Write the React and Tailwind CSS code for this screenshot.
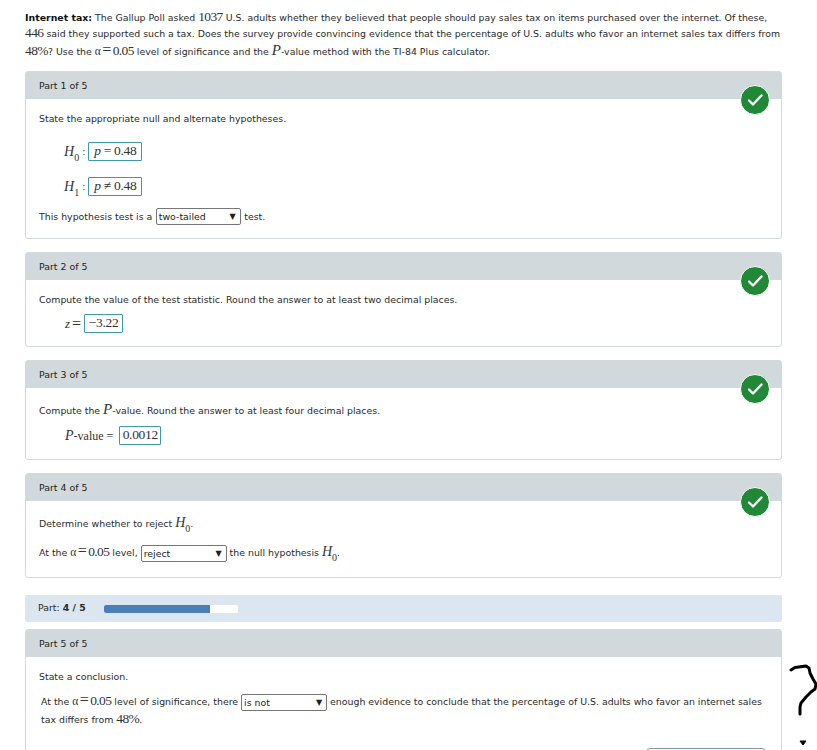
import React from 'react';

const Num = ({ children }) => (
  <span className="font-['Liberation_Serif',serif] text-[13.5px] leading-none tracking-[-0.6px] text-[#333]">{children}</span>
);

const Var = ({ children, className = '' }) => (
  <span className={`font-['Liberation_Serif',serif] italic leading-none text-[#333] ${className}`}>{children}</span>
);

const Hypo = ({ sub }) => (
  <span className="font-['Liberation_Serif',serif] text-[13px] leading-none text-[#333]">
    <i className="text-[14px]">H</i>
    <sub className="bottom-[-0.5em] text-[10px] not-italic">{sub}</sub>
  </span>
);

const Alpha = () => (
  <span className="font-['Liberation_Serif',serif] text-[13.5px] leading-none tracking-[-0.6px] text-[#333]">
    <span className="text-[11.5px]">α</span><span className="mx-[2px] text-[16px]">=</span>0.05
  </span>
);

const AnswerBox = ({ children, className = '' }) => (
  <span className={`inline-flex h-[19px] items-center justify-center whitespace-nowrap border border-[#3d98a8] rounded-[1px] font-['Liberation_Serif',serif] text-[13.5px] tracking-[-0.3px] text-[#333] ${className}`}>
    <span>{children}</span>
  </span>
);

const Select = ({ value, className = '' }) => (
  <span className={`inline-flex h-[17px] items-center justify-between border border-[#767676] rounded-[2px] pl-[2px] pr-[4px] text-[#222] align-middle ${className}`}>
    <span className="leading-none">{value}</span>
    <span className="text-[8px] leading-none">▼</span>
  </span>
);

const Check = () => (
  <div className="absolute right-[11px] top-[13px] flex h-[30px] w-[30px] items-center justify-center rounded-full border border-white bg-[#218838]">
    <svg width="18" height="14" viewBox="0 0 18 14" fill="none">
      <path d="M3 7.5 L7 11.5 L15.5 2.5" stroke="white" strokeWidth="2.4" strokeLinecap="round" strokeLinejoin="round" />
    </svg>
  </div>
);

const Part = ({ n, height, check = true, children }) => (
  <section className="relative rounded-[3px] border border-[#d3dadd] bg-white" style={{ height }}>
    <div className="flex h-[27px] items-center bg-[#d1d9dc] pl-[13px] pt-[1px] text-[#222]">Part {n} of 5</div>
    <div className="pl-[13px]">{children}</div>
    {check && <Check />}
  </section>
);

export default function App() {
  return (
    <div className="relative h-[750px] w-[817px] overflow-hidden bg-white font-['DejaVu_Sans',sans-serif] text-[9.4px] text-[#2a2a2a]">
      <div className="ml-[25px] w-[757px] pt-[10px]">
        <p className="h-[51px] whitespace-nowrap leading-[16.2px]">
          <b className="text-[#111]">Internet tax:</b> The Gallup Poll asked <Num>1037</Num> U.S. adults whether they believed that people should pay sales tax on items purchased over the internet. Of these,
          <br />
          <Num>446</Num> said they supported such a tax. Does the survey provide convincing evidence that the percentage of U.S. adults who favor an internet sales tax differs from
          <br />
          <Num>48%</Num>? Use the <Alpha /> level of significance and the <Var className="text-[15px]">P</Var>-value method with the TI-84 Plus calculator.
        </p>

        <div className="mt-[10px] flex flex-col gap-[13px]">
          <Part n={1} height={168}>
            <p className="mt-[13px]">State the appropriate null and alternate hypotheses.</p>
            <div className="ml-[25px] mt-[16px] flex items-center gap-[3px]">
              <Hypo sub="0" /><span className="text-[#333]">:</span>
              <AnswerBox className="w-[54px]"><i>p</i> = 0.48</AnswerBox>
            </div>
            <div className="ml-[25px] mt-[16px] flex items-center gap-[3px]">
              <Hypo sub="1" /><span className="text-[#333]">:</span>
              <AnswerBox className="w-[54px]"><i>p</i> ≠ 0.48</AnswerBox>
            </div>
            <div className="mt-[12px] flex items-center gap-[3.5px]">
              This hypothesis test is a <Select value="two-tailed" className="w-[85px]" /> test.
            </div>
          </Part>

          <Part n={2} height={95}>
            <p className="mt-[13px]">Compute the value of the test statistic. Round the answer to at least two decimal places.</p>
            <div className="ml-[26px] mt-[7px] flex items-center gap-[2px]">
              <Var className="text-[13px]">z</Var><span className="font-['Liberation_Serif',serif] text-[16px] leading-none text-[#333]">=</span>
              <AnswerBox className="ml-[1px] w-[39px]">−3.22</AnswerBox>
            </div>
          </Part>

          <Part n={3} height={100}>
            <p className="mt-[14px]">Compute the <Var className="text-[15px]">P</Var>-value. Round the answer to at least four decimal places.</p>
            <div className="ml-[26px] mt-[7px] flex items-center gap-[6px]">
              <span className="font-['Liberation_Serif',serif] text-[12px] text-[#333]"><i className="text-[14px]">P</i>-value =</span>
              <AnswerBox className="w-[42px]">0.0012</AnswerBox>
            </div>
          </Part>

          <Part n={4} height={105}>
            <p className="mt-[15px]">Determine whether to reject <Hypo sub="0" />.</p>
            <div className="mt-[12px]">
              At the <Alpha /> level, <Select value="reject" className="w-[86px]" /> the null hypothesis <Hypo sub="0" />.
            </div>
          </Part>
        </div>

        <div className="mt-[17px] flex h-[27px] items-center rounded-[2px] bg-[#dce6f0] pl-[13px]">
          <span className="w-[66px]">Part: <b>4 / 5</b></span>
          <div className="h-[8px] w-[134px] overflow-hidden rounded-[2px] bg-white">
            <div className="h-full w-[106px] bg-[#4a7eb8]" />
          </div>
        </div>

        <div className="mt-[7px]">
          <Part n={5} height={200} check={false}>
            <p className="mt-[13px]">State a conclusion.</p>
            <div className="ml-[2px] mt-[8px] w-[735px] leading-[18px]">
              At the <Alpha /> level of significance, there <Select value="is not" className="w-[86px]" /> enough evidence to conclude that the percentage of U.S. adults who favor an internet sales tax differs from <Num>48%</Num>.
            </div>
            <div className="absolute right-[15px] top-[118px] h-[20px] w-[120px] rounded-[4px] border border-[#7f9ba6] bg-white" />
          </Part>
        </div>
      </div>

      {/* hand-drawn question mark scribbled on the screenshot */}
      <svg className="absolute left-[785px] top-[660px]" width="32" height="90" viewBox="0 0 32 90" fill="none">
        <path d="M6 10 L10 7.5 L21 6 L24 8 L25 13 L28 19 L31 24 L30 29 L26 32 L21 37 L16 43 L15 47 L15 54" stroke="black" strokeWidth="3" strokeLinecap="round" strokeLinejoin="round" />
        <path d="M15 81 L21 81 L18 85 Z" fill="black" stroke="black" strokeWidth="1" strokeLinejoin="round" />
      </svg>
    </div>
  );
}
